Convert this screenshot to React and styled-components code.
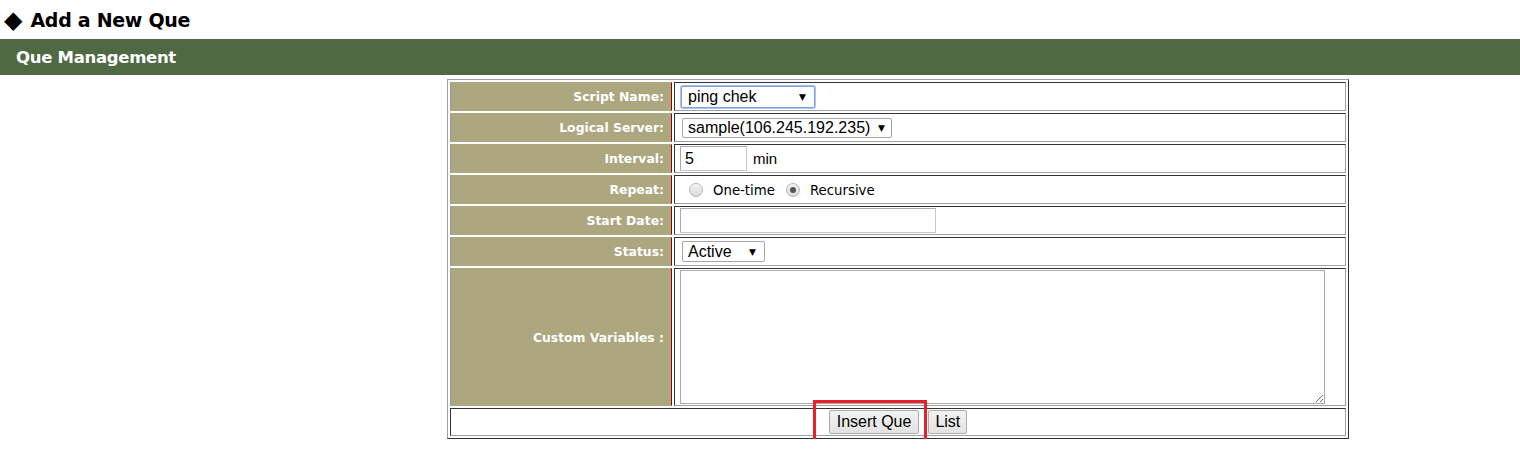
import React from "react";
import styled, { createGlobalStyle } from "styled-components";

const Global = createGlobalStyle`
  html, body { margin: 0; padding: 0; background: #fff; }
  body { font-family: "DejaVu Sans", Verdana, sans-serif; color: #000; }
`;

const Title = styled.h1`
  margin: 0;
  height: 39px;
  display: flex;
  align-items: center;
  gap: 8px;
  padding-left: 4px;
  font-size: 19px;
  letter-spacing: -0.3px;
  font-weight: bold;
`;

const Diamond = styled.span`
  font-size: 24px;
  line-height: 1;
  letter-spacing: 0;
  font-family: "DejaVu Sans", sans-serif;
`;

const Bar = styled.div`
  background: #4f6a43;
  height: 36px;
  display: flex;
  align-items: center;
  padding-left: 16px;
  color: #fff;
  font-weight: bold;
  font-size: 16.5px;
  letter-spacing: -0.3px;
`;

const Wrap = styled.div`
  padding: 4px 0 0 447px;
`;

const Table = styled.table`
  width: 902px;
  border-collapse: separate;
  border-spacing: 2px;
  border-style: solid;
  border-width: 1px;
  border-color: #a0a0a0 #333 #333 #a0a0a0;
`;

const Label = styled.td`
  width: 213px;
  height: ${(p) => p.$h || 27}px;
  background: #aca77f;
  color: #fff;
  font-weight: bold;
  font-size: 12.4px;
  text-align: right;
  vertical-align: middle;
  padding: 0 7px 0 0;
  border-style: solid;
  border-width: 1px;
  border-color: #aca77f #990000 #aca77f #9a9a9a;
`;

const Cell = styled.td`
  border-style: solid;
  border-width: 1px;
  border-color: #333 #a0a0a0 #a0a0a0 #333;
  vertical-align: middle;
  text-align: ${(p) => (p.$center ? "center" : "left")};
  padding: ${(p) => (p.$center ? "1px 0" : "0 0 0 5px")};
`;

const Row = styled.div`
  display: flex;
  align-items: center;
  gap: ${(p) => p.$gap || 6}px;
`;

const SelectWrap = styled.span`
  position: relative;
  display: inline-flex;
  width: ${(p) => p.$w}px;
  height: ${(p) => p.$h}px;
  margin-left: ${(p) => p.$ml || 0}px;
`;

const Select = styled.select`
  appearance: none;
  width: 100%;
  height: 100%;
  box-sizing: border-box;
  margin: 0;
  padding: 0 0 0 ${(p) => p.$pl || 5}px;
  font-family: "Liberation Sans", Arial, sans-serif;
  font-size: 16px;
  color: #000;
  background: #fff;
  border: 1px solid ${(p) => (p.$focus ? "#7ea3de" : "#a6a6a6")};
  box-shadow: ${(p) => (p.$focus ? "0 0 0 1px #a9c4ee" : "none")};
  border-radius: 2px;
  outline: none;
`;

const Arrow = styled.span`
  position: absolute;
  right: ${(p) => p.$r || 8}px;
  top: 50%;
  transform: translateY(-50%);
  font-size: 9px;
  pointer-events: none;
  font-family: "DejaVu Sans", sans-serif;
`;

const TextInput = styled.input`
  box-sizing: border-box;
  width: ${(p) => p.$w}px;
  height: 25px;
  margin: 0;
  padding: 0 4px;
  font-family: "Liberation Sans", Arial, sans-serif;
  font-size: 16px;
  border-style: solid;
  border-width: 1px;
  border-color: #a9a9a9 #c8c8c8 #c8c8c8 #a9a9a9;
  outline: none;
`;

const Unit = styled.span`
  font-family: "Liberation Sans", Arial, sans-serif;
  font-size: 15px;
`;

const Radio = styled.span`
  width: 14px;
  height: 14px;
  box-sizing: border-box;
  border-radius: 50%;
  border: 1px solid #b4b4b4;
  background: linear-gradient(#f3f3f3, #d9d9d9);
  display: inline-flex;
  align-items: center;
  justify-content: center;
  margin-left: ${(p) => (p.$first ? 9 : 1)}px;
  &::after {
    content: "";
    width: 6px;
    height: 6px;
    border-radius: 50%;
    background: ${(p) => (p.$checked ? "#555" : "transparent")};
  }
`;

const RadioText = styled.span`
  font-size: 13.3px;
  padding-top: 2px;
`;

const TextArea = styled.textarea`
  display: block;
  box-sizing: border-box;
  width: 645px;
  height: 134px;
  margin: 1px 0;
  border: 1px solid #a9a9a9;
  resize: both;
  outline: none;
`;

const Buttons = styled.div`
  display: inline-flex;
  gap: 9px;
  align-items: center;
`;

const BtnHolder = styled.span`
  position: relative;
  display: inline-flex;
`;

const Highlight = styled.span`
  position: absolute;
  left: -16px;
  top: -10px;
  width: 114px;
  height: 42px;
  box-sizing: border-box;
  border: 3px solid #e8202a;
  pointer-events: none;
`;

const Button = styled.button`
  height: 24px;
  box-sizing: border-box;
  padding: 0 ${(p) => p.$px || 7}px;
  font-family: "Liberation Sans", Arial, sans-serif;
  font-size: 16px;
  color: #000;
  background: linear-gradient(#f2f2f2, #e3e3e3);
  border: 1px solid #acacac;
  border-radius: 2px;
  margin: 0;
`;

export default function App() {
  return (
    <>
      <Global />
      <Title>
        <Diamond>◆</Diamond>
        Add a New Que
      </Title>
      <Bar>Que Management</Bar>
      <Wrap>
        <Table>
          <tbody>
            <tr>
              <Label>Script Name:</Label>
              <Cell>
                <SelectWrap $w={134} $h={22} $ml={1}>
                  <Select $focus defaultValue="ping chek" $pl={6}>
                    <option>ping chek</option>
                  </Select>
                  <Arrow $r={9}>▼</Arrow>
                </SelectWrap>
              </Cell>
            </tr>
            <tr>
              <Label>Logical Server:</Label>
              <Cell>
                <SelectWrap $w={210} $h={20} $ml={2}>
                  <Select defaultValue="s">
                    <option value="s">sample(106.245.192.235)</option>
                  </Select>
                  <Arrow $r={7}>▼</Arrow>
                </SelectWrap>
              </Cell>
            </tr>
            <tr>
              <Label>Interval:</Label>
              <Cell>
                <Row>
                  <TextInput $w={67} defaultValue="5" />
                  <Unit>min</Unit>
                </Row>
              </Cell>
            </tr>
            <tr>
              <Label>Repeat:</Label>
              <Cell>
                <Row $gap={10}>
                  <Radio $first />
                  <RadioText>One-time</RadioText>
                  <Radio $checked />
                  <RadioText>Recursive</RadioText>
                </Row>
              </Cell>
            </tr>
            <tr>
              <Label>Start Date:</Label>
              <Cell>
                <TextInput $w={256} />
              </Cell>
            </tr>
            <tr>
              <Label>Status:</Label>
              <Cell>
                <SelectWrap $w={83} $h={21} $ml={2}>
                  <Select defaultValue="Active">
                    <option>Active</option>
                  </Select>
                  <Arrow $r={9}>▼</Arrow>
                </SelectWrap>
              </Cell>
            </tr>
            <tr>
              <Label $h={135}>Custom Variables :</Label>
              <Cell>
                <TextArea />
              </Cell>
            </tr>
            <tr>
              <Cell colSpan={2} $center>
                <Buttons>
                  <BtnHolder>
                    <Button>Insert Que</Button>
                    <Highlight />
                  </BtnHolder>
                  <Button $px={6}>List</Button>
                </Buttons>
              </Cell>
            </tr>
          </tbody>
        </Table>
      </Wrap>
    </>
  );
}
